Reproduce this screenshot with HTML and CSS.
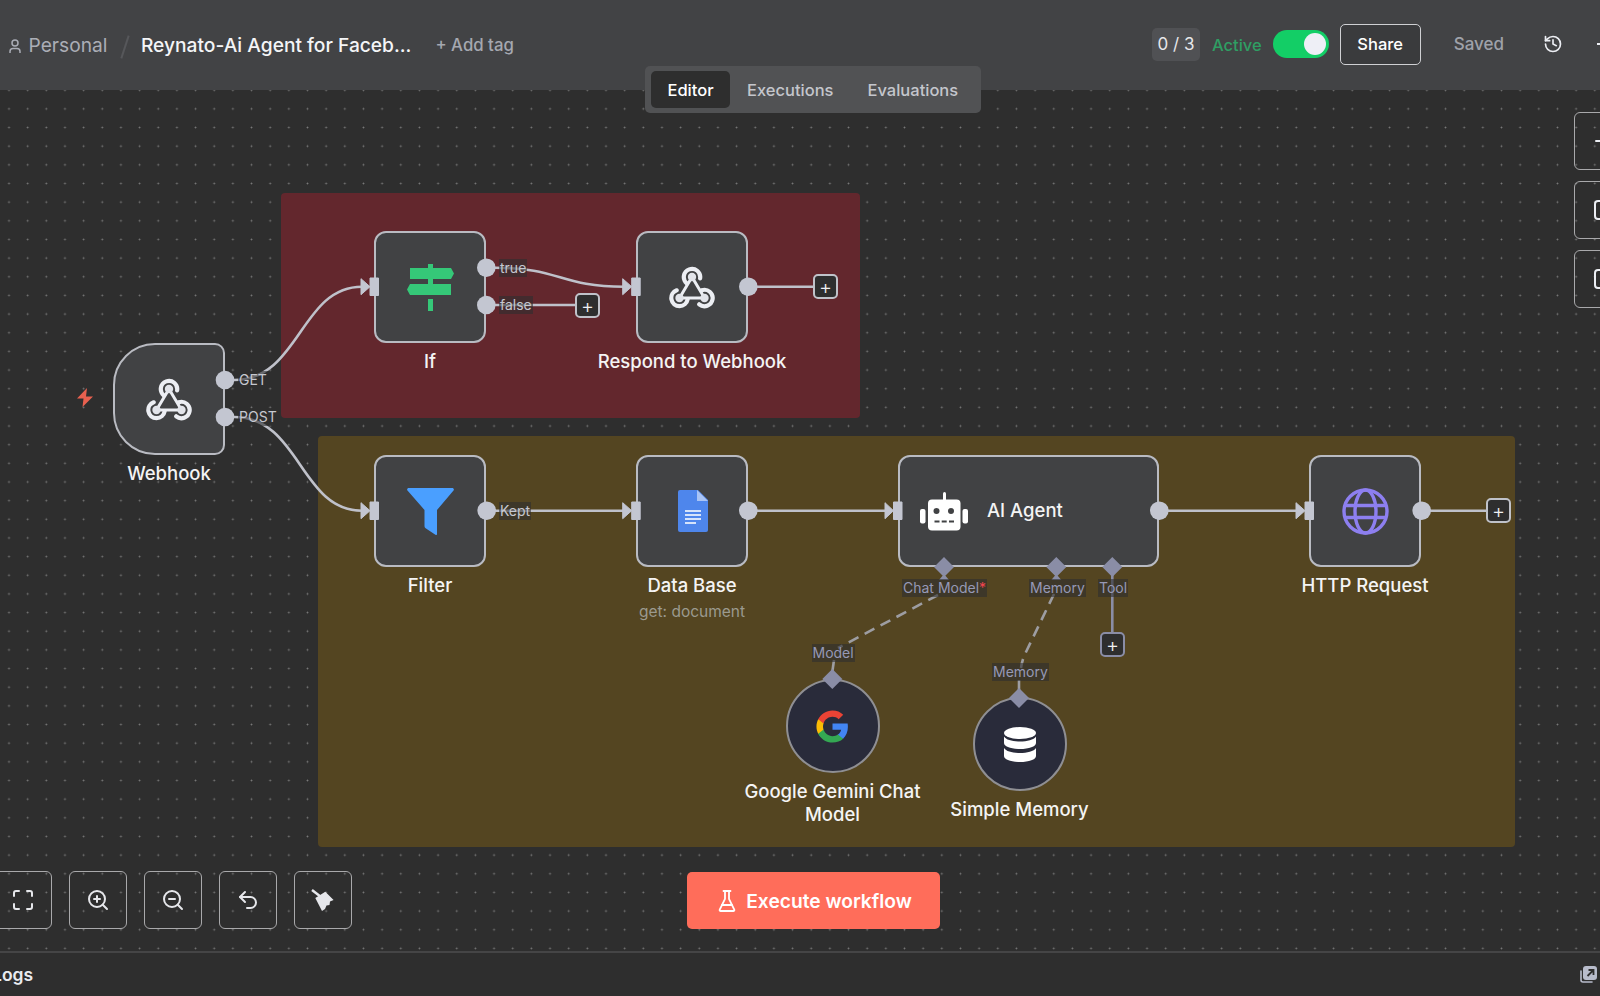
FILE: index.html
```html
<!DOCTYPE html>
<html lang="en">
<head>
    <meta charset="UTF-8">
    <meta name="viewport" content="width=device-width, initial-scale=1.0">
    <title>Reynato-Ai Agent for Facebook</title>
    <link rel="stylesheet" href="styles.css">
</head>
<body>
    <svg class="defs" width="0" height="0">
        <symbol id="webhook-icon" viewBox="0 0 46 43">
            <g fill="none" stroke="#eceef3" stroke-linecap="round">
                <g stroke-width="4.200">
                    <path d="M17.700 17.300 A8.200 8.200 0 1 1 31.100 12.400"/>
                    <path d="M32.700 24.300 A8.200 8.200 0 1 1 30.200 38.300"/>
                    <path d="M18.600 33.400 A8.200 8.200 0 1 1 7.700 24.300"/>
                </g>
                <path d="M23 11 L35.500 32 L10.500 32 L23 11" stroke-width="3"/>
            </g>
            <g fill="#e2e4ea">
                <circle cx="23" cy="11" r="4.200"/>
                <circle cx="10.500" cy="32" r="4.200"/>
                <circle cx="35.500" cy="32" r="4.200"/>
            </g>
        </symbol>
    </svg>

    <header class="topbar">
        <div class="breadcrumb">
            <svg class="user-icon" viewBox="0 0 12 15" fill="none" stroke="#a9acb5" stroke-width="1.500"><circle cx="6" cy="4" r="3"/><path d="M1 14v-1.500a3 3 0 0 1 3-3h4a3 3 0 0 1 3 3V14"/></svg>
            <span class="project">Personal</span>
            <span class="slash"></span>
            <span class="wf-name">Reynato-Ai Agent for Faceb...</span>
            <span class="add-tag">+ Add tag</span>
        </div>
        <div class="actions">
            <span class="counter">0 / 3</span>
            <span class="active-label">Active</span>
            <span class="toggle"><span class="knob"></span></span>
            <button class="share-btn">Share</button>
            <span class="saved">Saved</span>
            <svg class="history-icon" viewBox="0 0 24 24" fill="none" stroke="#eceef3" stroke-width="2" stroke-linecap="round" stroke-linejoin="round"><path d="M3 12a9 9 0 1 0 9-9 9.750 9.750 0 0 0-6.740 2.740L3 8"/><path d="M3 3v5h5"/><path d="M12 7v5l4 2"/></svg>
            <span class="more"></span>
        </div>
    </header>

    <nav class="tabs">
        <span class="tab tab-active">Editor</span>
        <span class="tab">Executions</span>
        <span class="tab">Evaluations</span>
    </nav>

    <main class="canvas">
        <div class="sticky sticky-red"></div>
        <div class="sticky sticky-yellow"></div>

        <!-- viewBox starts at y=90 so the paths read in page coordinates -->
        <svg class="edges" viewBox="0 90 1600 862" fill="none">
            <g stroke="#bfc1ca" stroke-width="2.600">
                <path d="M234 380 C300 380 300 286.700 362 286.700"/>
                <path d="M234 417 C300 417 300 510.700 362 510.700"/>
                <path d="M495 267.700 C560 267.700 560 286.700 624 286.700"/>
                <path d="M495 305 H576"/>
                <path d="M757 286.700 H813"/>
                <path d="M495 510.700 H624"/>
                <path d="M757 510.700 H886"/>
                <path d="M1168 510.700 H1297"/>
                <path d="M1430 510.700 H1487"/>
            </g>
            <path d="M1112.300 575 V632" stroke="#8a8da6" stroke-width="2.600"/>
            <g stroke="#9d9da2" stroke-width="2.600">
                <path d="M938 595 L838 648" stroke-dasharray="11 7"/>
                <path d="M1054 594 L1026 652 Q1022 660 1021 668" stroke-dasharray="11 7"/>
                <path d="M834 660 L832.300 672"/>
                <path d="M1019 680 V690"/>
            </g>
        </svg>

        <svg class="bolt" viewBox="0 0 16 19"><path d="M10 0 L0 10.500 H6.500 L5.500 19 L16 8.500 H9 Z" fill="#e8604f"/></svg>

        <div class="node node-webhook">
            <div class="node-box node-box-trigger"><svg class="icon-webhook"><use href="#webhook-icon"/></svg></div>
            <div class="node-label">Webhook</div>
        </div>

        <div class="node node-if">
            <div class="node-box">
                <svg class="icon-47" viewBox="0 0 47 47" fill="#35c878"><path d="M21 0h5v4h18l3 5.500-3 5.500H3V4h18zM21 15h5v5H21zM3 20h41v11H3l-3-5.500zM21 35h5v12h-5z" fill-rule="evenodd"/></svg>
            </div>
            <div class="node-label">If</div>
        </div>

        <div class="node node-respond">
            <div class="node-box"><svg class="icon-webhook"><use href="#webhook-icon"/></svg></div>
            <div class="node-label">Respond to Webhook</div>
        </div>

        <div class="node node-filter">
            <div class="node-box">
                <svg class="icon-47" viewBox="0 0 47 47"><path d="M2 0h43c1.800 0 2.500 1.500 1.300 2.800L30 22v24c0 1-.8 1.300-1.600.8L19 40.500c-1-.6-1.500-1.300-1.500-2.500V22L.7 2.800C-.5 1.500.2 0 2 0z" fill="#4a9fff"/></svg>
            </div>
            <div class="node-label">Filter</div>
        </div>

        <div class="node node-docs">
            <div class="node-box">
                <svg class="icon-docs" viewBox="0 0 30 42">
                    <path d="M2 0h18l10 10v30a2 2 0 0 1-2 2H2a2 2 0 0 1-2-2V2a2 2 0 0 1 2-2z" fill="#4e86ec"/>
                    <path d="M19 0l11 11H19z" fill="#a9c4f5"/>
                    <path d="M7 21h16M7 25h16M7 29h16M7 33h11" stroke="#d5e3fb" stroke-width="2"/>
                </svg>
            </div>
            <div class="node-label">Data Base</div>
            <div class="node-sub">get: document</div>
        </div>

        <div class="node node-agent">
            <div class="node-box node-box-wide">
                <svg class="icon-robot" viewBox="0 0 48 39">
                    <rect x="23" y="0" width="3" height="9" rx="1.500" fill="#fff"/>
                    <rect x="8" y="7.500" width="32.500" height="31" rx="4" fill="#fff"/>
                    <rect x="0" y="17" width="5.500" height="14.500" rx="2" fill="#fff"/>
                    <rect x="42.500" y="17" width="5.500" height="14.500" rx="2" fill="#fff"/>
                    <circle cx="16.500" cy="19" r="3" fill="#414244"/>
                    <circle cx="31" cy="19" r="3" fill="#414244"/>
                    <path d="M14.500 29.500h5M21.700 29.500h5M29 29.500h5" stroke="#414244" stroke-width="2"/>
                </svg>
                <span class="agent-name">AI Agent</span>
            </div>
        </div>

        <div class="node node-http">
            <div class="node-box">
                <svg class="icon-47" viewBox="0 0 47 47" fill="none" stroke="#8d7ff0" stroke-width="3.400">
                    <circle cx="23.500" cy="23.500" r="21.500"/>
                    <ellipse cx="23.500" cy="23.500" rx="10.500" ry="21.500"/>
                    <path d="M4 17.500h39M4 29.500h39"/>
                </svg>
            </div>
            <div class="node-label">HTTP Request</div>
        </div>

        <div class="node node-round node-gemini">
            <div class="node-box node-box-round">
                <svg class="icon-google" viewBox="0 0 24 24">
                    <path d="M22.560 12.250c0-.78-.07-1.530-.2-2.250H12v4.260h5.920c-.26 1.370-1.040 2.530-2.210 3.310v2.770h3.570c2.080-1.920 3.280-4.740 3.280-8.090z" fill="#4285f4"/>
                    <path d="M12 23c2.970 0 5.460-.98 7.280-2.660l-3.570-2.770c-.98.66-2.230 1.060-3.710 1.060-2.860 0-5.290-1.930-6.160-4.530H2.180v2.840C3.990 20.530 7.700 23 12 23z" fill="#34a853"/>
                    <path d="M5.840 14.090c-.22-.66-.35-1.360-.35-2.090s.13-1.430.35-2.090V7.070H2.180C1.430 8.550 1 10.220 1 12s.43 3.450 1.180 4.930l2.850-2.220.81-.62z" fill="#fbbc05"/>
                    <path d="M12 5.380c1.620 0 3.060.56 4.210 1.640l3.150-3.150C17.450 2.090 14.970 1 12 1 7.700 1 3.990 3.470 2.180 7.070l3.660 2.840c.87-2.600 3.300-4.530 6.160-4.530z" fill="#ea4335"/>
                </svg>
            </div>
            <div class="node-label node-label-wrap">Google Gemini Chat Model</div>
        </div>

        <div class="node node-round node-memory">
            <div class="node-box node-box-round">
                <svg class="icon-db" viewBox="0 0 32 35" fill="#fff">
                    <ellipse cx="16" cy="6" rx="16" ry="6"/>
                    <path d="M0 9.500C2 13 9 14.500 16 14.500S30 13 32 9.500V16c0 3.500-7 6-16 6S0 19.500 0 16z"/>
                    <path d="M0 21C2 24.500 9 26 16 26s14-1.500 16-5v8c0 3.500-7 6-16 6S0 32.500 0 29z"/>
                </svg>
            </div>
            <div class="node-label">Simple Memory</div>
        </div>

        <svg class="edges" viewBox="0 90 1600 862">
            <g fill="#c3c6d1">
                <circle cx="225" cy="380" r="9.300"/>
                <circle cx="225" cy="417" r="9.300"/>
                <circle cx="486.300" cy="267.700" r="9.300"/>
                <circle cx="486.300" cy="305" r="9.300"/>
                <circle cx="748.300" cy="286.700" r="9.300"/>
                <circle cx="486.700" cy="510.700" r="9.300"/>
                <circle cx="748.300" cy="510.700" r="9.300"/>
                <circle cx="1159.300" cy="510.700" r="9.300"/>
                <circle cx="1421.700" cy="510.700" r="9.300"/>
            </g>
            <g fill="#c3c6d1" stroke="#c3c6d1" stroke-width="1" stroke-linejoin="round">
                <path d="M361 278.700 L370 286.700 L361 294.700 Z M370 278 h8.500 v17.500 h-8.500 Z"/>
                <path d="M622.700 278.700 L631.700 286.700 L622.700 294.700 Z M631.700 278 h8.500 v17.500 h-8.500 Z"/>
                <path d="M361 502.700 L370 510.700 L361 518.700 Z M370 502 h8.500 v17.500 h-8.500 Z"/>
                <path d="M622.700 502.700 L631.700 510.700 L622.700 518.700 Z M631.700 502 h8.500 v17.500 h-8.500 Z"/>
                <path d="M885 502.700 L893.500 510.700 L885 518.700 Z M893.500 502 h8.500 v17.500 h-8.500 Z"/>
                <path d="M1296 502.700 L1305 510.700 L1296 518.700 Z M1305 502 h8.500 v17.500 h-8.500 Z"/>
            </g>
            <g fill="#8a8da6">
                <path d="M944 557 l10 10 l-10 10 l-10 -10 Z M944 574 l5 6 h-10 Z"/>
                <path d="M1056.300 557 l10 10 l-10 10 l-10 -10 Z M1056.300 574 l5 6 h-10 Z"/>
                <path d="M1112.300 557 l10 10 l-10 10 l-10 -10 Z"/>
                <path d="M832.300 669 l10 10 l-10 10 l-10 -10 Z"/>
                <path d="M1019 688 l10 10 l-10 10 l-10 -10 Z"/>
            </g>
        </svg>

        <span class="edge-label label-get">GET</span>
        <span class="edge-label label-post">POST</span>
        <span class="edge-label label-true">true</span>
        <span class="edge-label label-false">false</span>
        <span class="edge-label label-kept">Kept</span>
        <span class="edge-label sub-label label-chat">Chat Model<span class="required">*</span></span>
        <span class="edge-label sub-label label-memory">Memory</span>
        <span class="edge-label sub-label label-tool">Tool</span>
        <span class="edge-label sub-label label-model">Model</span>
        <span class="edge-label sub-label label-memory2">Memory</span>

        <span class="add-btn add-false">+</span>
        <span class="add-btn add-respond">+</span>
        <span class="add-btn add-tool">+</span>
        <span class="add-btn add-http">+</span>

        <div class="side-tools">
            <button class="tool-btn">
                <svg viewBox="0 0 24 24" class="tool-icon" fill="none" stroke="#eceef3" stroke-width="2" stroke-linecap="round"><path d="M5 12h14M12 5v14"/></svg>
            </button>
            <button class="tool-btn">
                <svg viewBox="0 0 24 24" class="tool-icon" fill="none" stroke="#eceef3" stroke-width="2"><rect x="4" y="3" width="16" height="18" rx="3"/></svg>
            </button>
            <button class="tool-btn">
                <svg viewBox="0 0 24 24" class="tool-icon" fill="none" stroke="#eceef3" stroke-width="2"><rect x="4" y="3" width="16" height="18" rx="3"/></svg>
            </button>
        </div>

        <div class="zoom-tools">
            <button class="tool-btn">
                <svg viewBox="0 0 24 24" class="tool-icon" fill="none" stroke="#e6e7eb" stroke-width="2" stroke-linecap="round" stroke-linejoin="round"><path d="M8 3H5a2 2 0 0 0-2 2v3"/><path d="M21 8V5a2 2 0 0 0-2-2h-3"/><path d="M3 16v3a2 2 0 0 0 2 2h3"/><path d="M16 21h3a2 2 0 0 0 2-2v-3"/></svg>
            </button>
            <button class="tool-btn">
                <svg viewBox="0 0 24 24" class="tool-icon" fill="none" stroke="#e6e7eb" stroke-width="2" stroke-linecap="round"><circle cx="11" cy="11" r="8"/><path d="m21 21-4.300-4.300"/><path d="M11 8v6"/><path d="M8 11h6"/></svg>
            </button>
            <button class="tool-btn">
                <svg viewBox="0 0 24 24" class="tool-icon" fill="none" stroke="#e6e7eb" stroke-width="2" stroke-linecap="round"><circle cx="11" cy="11" r="8"/><path d="m21 21-4.300-4.300"/><path d="M8 11h6"/></svg>
            </button>
            <button class="tool-btn">
                <svg viewBox="0 0 24 24" class="tool-icon" fill="none" stroke="#e6e7eb" stroke-width="2" stroke-linecap="round" stroke-linejoin="round"><path d="M9 14 4 9l5-5"/><path d="M4 9h10.500a5.500 5.500 0 0 1 5.500 5.500a5.500 5.500 0 0 1-5.500 5.500H11"/></svg>
            </button>
            <button class="tool-btn">
                <svg viewBox="0 0 24 24" class="tool-icon" fill="#e6e7eb"><path d="M1 2 L11 9.700" stroke="#e6e7eb" stroke-width="2.500"/><path d="M4.300 10 L14.300 3.700 L22.600 12 L19 13.500 L18.500 17 L15.500 17.500 L14 21 L11 23 Z"/></svg>
            </button>
        </div>

        <button class="execute-btn">
            <svg class="flask" viewBox="0 0 24 24" fill="none" stroke="#fff" stroke-width="1.800" stroke-linecap="round" stroke-linejoin="round"><path d="M10 2v7.527a2 2 0 0 1-.211.896L4.720 20.550a1 1 0 0 0 .9 1.450h12.760a1 1 0 0 0 .9-1.450l-5.069-10.127A2 2 0 0 1 14 9.527V2"/><path d="M8.500 2h7"/><path d="M7 16h10"/></svg>
            Execute workflow
        </button>
    </main>

    <footer class="logs-bar">
        <span class="logs-title">Logs</span>
        <svg class="logs-icon" viewBox="0 0 17 17">
            <rect x="3" y="0" width="14" height="14" rx="3" fill="#b8bccb"/>
            <path d="M1 5v9a2 2 0 0 0 2 2h9" fill="none" stroke="#b8bccb" stroke-width="1.600" stroke-linecap="round"/>
            <path d="M7.500 10 L13 4.500 M8.500 4 H13.500 V9" fill="none" stroke="#2e2e2e" stroke-width="1.800"/>
        </svg>
    </footer>
</body>
</html>
```

FILE: styles.css
```css
* {
    box-sizing: border-box;
}

body {
    font-family: 'Inter', 'Liberation Sans', sans-serif;
    background-color: #2e2e2e;
    margin: 0;
    height: 100vh;
    display: flex;
    flex-direction: column;
    overflow: hidden;
    position: relative;
    color: #fff;
}

button {
    font-family: inherit;
    cursor: pointer;
}

.defs {
    position: absolute;
}

/* top bar */
.topbar {
    height: 90px;
    flex: none;
    display: flex;
    align-items: center;
    justify-content: space-between;
    padding-left: 9px;
    background-color: #424345;
    overflow: hidden;
}

.breadcrumb {
    display: flex;
    align-items: center;
}

.user-icon {
    width: 12px;
    height: 15px;
    margin-top: 2px;
}

.project {
    margin-left: 7.500px;
    font-size: 19.200px;
    color: #abaeb6;
}

.slash {
    width: 2px;
    height: 24px;
    margin: 3px 0 0 17px;
    background-color: #56575a;
    transform: rotate(18deg);
}

.wf-name {
    margin-left: 14.500px;
    font-size: 19.200px;
    font-weight: 500;
    color: #f4f5f7;
}

.add-tag {
    margin-left: 24px;
    font-size: 16.800px;
    font-weight: 500;
    color: #a5a8b0;
}

.actions {
    display: flex;
    align-items: center;
    margin-bottom: 2px;
}

.counter {
    width: 48px;
    height: 33px;
    display: flex;
    align-items: center;
    justify-content: center;
    border-radius: 5px;
    background-color: #505154;
    font-size: 17px;
    color: #e6e7ea;
}

.active-label {
    margin-left: 12px;
    padding-top: 2px;
    font-size: 16.500px;
    font-weight: 500;
    color: #2f9e63;
}

.toggle {
    margin-left: 11px;
    width: 56px;
    height: 28px;
    display: flex;
    align-items: center;
    justify-content: flex-end;
    padding-right: 3px;
    border-radius: 14px;
    background-color: #13ce66;
}

.knob {
    width: 22px;
    height: 22px;
    border-radius: 50%;
    background-color: #eeeff6;
}

.share-btn {
    margin-left: 11px;
    width: 81px;
    height: 41px;
    border: 1px solid #cfd0d3;
    border-radius: 5px;
    background-color: #3a3b3d;
    color: #fff;
    font-size: 16.500px;
    font-weight: 500;
}

.saved {
    margin-left: 33px;
    font-size: 17px;
    font-weight: 500;
    color: #9fa2aa;
}

.history-icon {
    margin-left: 39px;
    width: 20px;
    height: 20px;
}

.more {
    margin-left: 34px;
    width: 3px;
    height: 2px;
    background-color: #eceef3;
}

/* editor / executions switch */
.tabs {
    position: absolute;
    left: 645px;
    top: 66px;
    width: 336px;
    height: 47px;
    z-index: 5;
    display: flex;
    align-items: center;
    padding-left: 6px;
    border-radius: 5px;
    background-color: #515254;
}

.tab {
    height: 37px;
    display: flex;
    align-items: center;
    padding: 0 17px;
    font-size: 16.500px;
    font-weight: 500;
    color: #c4c6cc;
}

.tab-active {
    width: 79px;
    justify-content: center;
    padding: 0;
    border-radius: 5px;
    background-color: #2e2e2e;
    color: #fff;
}

/* canvas */
.canvas {
    flex: 1;
    position: relative;
    overflow: hidden;
    background-color: #2e2e2e;
    background-image: radial-gradient(circle, #7a7a7a 0.800px, transparent 1.100px);
    background-size: 18.670px 18.670px;
    background-position: -0.330px -9.130px;
}

.sticky {
    position: absolute;
    border-radius: 4px;
}

.sticky-red {
    left: 281px;
    top: 103px;
    width: 579px;
    height: 225px;
    background-color: #63272d;
}

.sticky-yellow {
    left: 318px;
    top: 346px;
    width: 1196.500px;
    height: 411px;
    background-color: #544521;
}

.edges {
    position: absolute;
    left: 0;
    top: 0;
    width: 1600px;
    height: 862px;
}

.bolt {
    position: absolute;
    left: 77px;
    top: 298px;
    width: 16px;
    height: 19px;
}

/* nodes */
.node {
    position: absolute;
    width: 112px;
    display: flex;
    flex-direction: column;
    align-items: center;
}

.node-box {
    width: 100%;
    height: 112px;
    flex: none;
    display: flex;
    align-items: center;
    justify-content: center;
    border: 2.800px solid #b9bbc2;
    border-radius: 12px;
    background-color: #414244;
}

.node-box-trigger {
    border-radius: 42px 10px 10px 42px;
}

.node-box-wide {
    justify-content: flex-start;
    padding-left: 20px;
}

.node-box-round {
    width: 94px;
    height: 94px;
    border-color: #8f8f93;
    border-radius: 50%;
    background-color: #292b3a;
}

.node-label {
    margin-top: 7px;
    font-size: 18.500px;
    line-height: 23px;
    font-weight: 500;
    white-space: nowrap;
    text-align: center;
    color: #f4f4f4;
}

.node-label-wrap {
    width: 190px;
    white-space: normal;
}

.node-sub {
    margin-top: 5px;
    font-size: 15.500px;
    line-height: 20px;
    white-space: nowrap;
    color: #9b9a8f;
}

.node-webhook { left: 113px; top: 253px; }
.node-if { left: 374px; top: 141px; }
.node-respond { left: 636px; top: 141px; }
.node-filter { left: 374px; top: 365px; }
.node-docs { left: 636px; top: 365px; }
.node-agent { left: 898px; top: 365px; width: 261px; }
.node-http { left: 1309px; top: 365px; }
.node-round { width: 94px; }
.node-gemini { left: 785.500px; top: 589px; }
.node-memory { left: 972.500px; top: 607px; }

.icon-webhook {
    width: 46px;
    height: 43px;
}

.icon-47 {
    width: 47px;
    height: 47px;
}

.icon-docs {
    width: 30px;
    height: 42px;
    margin-left: 2px;
}

.icon-robot {
    width: 48px;
    height: 39px;
}

.icon-google {
    width: 35px;
    height: 35px;
}

.icon-db {
    width: 32px;
    height: 35px;
}

.agent-name {
    margin: -2px 0 0 19px;
    font-size: 18.500px;
    font-weight: 500;
    color: #f4f4f4;
}

/* labels on the connections */
.edge-label {
    position: absolute;
    height: 18px;
    padding: 0 1px;
    font-size: 14px;
    line-height: 18px;
    white-space: nowrap;
    color: #c6c8d0;
    background-color: rgba(46, 46, 46, 0.6);
}

.sub-label {
    color: #9699b6;
}

.required {
    color: #f4444f;
}

.label-get { left: 238px; top: 281px; }
.label-post { left: 238px; top: 318px; }
.label-true { left: 499px; top: 169px; }
.label-false { left: 499px; top: 206px; }
.label-kept { left: 499px; top: 412px; }
.label-chat { left: 902px; top: 489px; }
.label-memory { left: 1029px; top: 489px; }
.label-tool { left: 1098px; top: 489px; }
.label-model { left: 811.500px; top: 554px; }
.label-memory2 { left: 992px; top: 573px; }

.add-btn {
    position: absolute;
    width: 25px;
    height: 25px;
    display: flex;
    align-items: center;
    justify-content: center;
    border: 2.500px solid #c0c2c9;
    border-radius: 5px;
    background-color: #2e2e2e;
    font-size: 20px;
    font-weight: 300;
    line-height: 1;
    color: #f0f0f2;
}

.add-false { left: 575px; top: 203px; }
.add-respond { left: 813px; top: 184px; }
.add-tool { left: 1100px; top: 542px; border-color: #8a8da6; }
.add-http { left: 1486px; top: 408px; }

/* floating buttons */
.tool-btn {
    width: 58px;
    height: 58px;
    flex: none;
    display: flex;
    align-items: center;
    justify-content: center;
    padding: 0;
    border: 1px solid #a9a9ab;
    border-radius: 6px;
    background-color: transparent;
}

.tool-icon {
    width: 24px;
    height: 24px;
}

.side-tools {
    position: absolute;
    left: 1574px;
    top: 22px;
    display: flex;
    flex-direction: column;
    gap: 11px;
}

.zoom-tools {
    position: absolute;
    left: -6.500px;
    top: 781px;
    display: flex;
    gap: 17px;
}

.execute-btn {
    position: absolute;
    left: 687px;
    top: 782px;
    width: 253px;
    height: 57px;
    display: flex;
    align-items: center;
    justify-content: center;
    gap: 7px;
    padding: 0;
    border: none;
    border-radius: 5px;
    background-color: #ff6d5a;
    color: #fff;
    font-size: 19.200px;
    font-weight: 600;
}

.flask {
    width: 24px;
    height: 24px;
}

/* logs */
.logs-bar {
    height: 45px;
    flex: none;
    display: flex;
    align-items: center;
    justify-content: space-between;
    padding-right: 3px;
    border-top: 2px solid #454546;
    background-color: #2e2e2e;
}

.logs-title {
    margin-left: -8px;
    font-size: 17.500px;
    font-weight: 600;
    color: #e9ebf0;
}

.logs-icon {
    width: 17px;
    height: 17px;
}
```
